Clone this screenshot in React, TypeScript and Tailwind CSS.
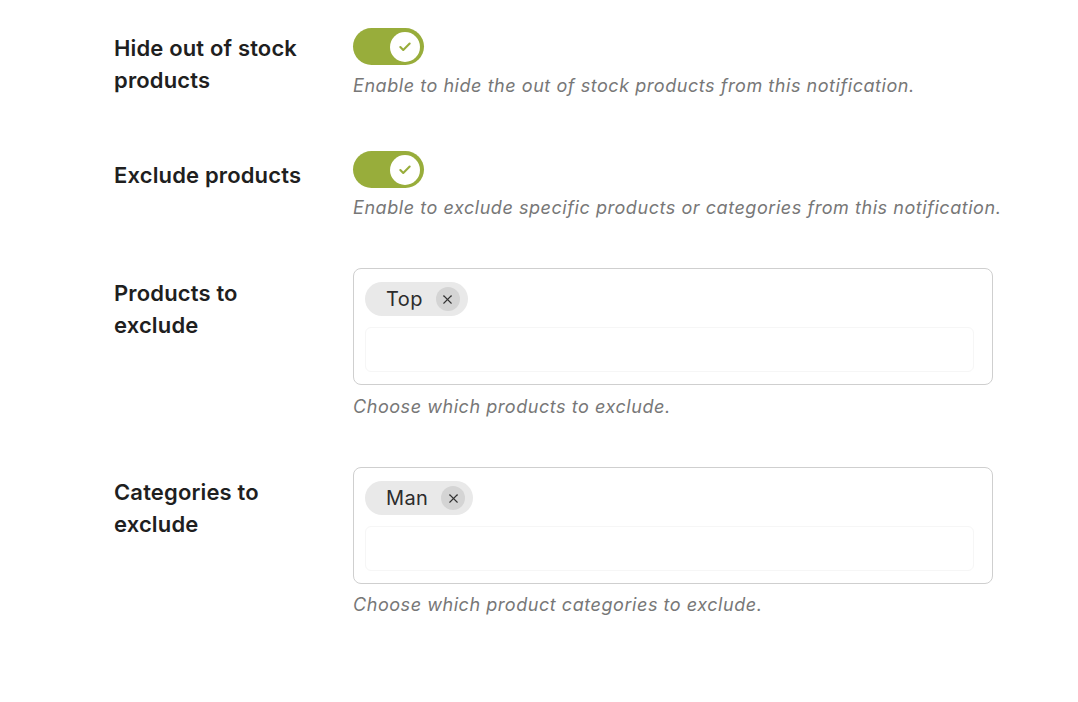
import { Check, X } from "lucide-react";

const font = { fontFamily: "Inter, 'Noto Sans', sans-serif" };

function Toggle() {
  return (
    <div className="flex h-[37px] w-[71px] items-center justify-end rounded-full bg-[#98ad3b] pr-[4px]">
      <div className="flex h-[30px] w-[30px] items-center justify-center rounded-full bg-white">
        <Check className="h-[14px] w-[14px] text-[#98ad3b]" strokeWidth={3.6} />
      </div>
    </div>
  );
}

function Chip({ label }: { label: string }) {
  return (
    <div className="flex h-[34px] w-fit items-center rounded-full bg-[#e9e9e9] pl-[21px] pr-[8px]">
      <span className="text-[20px] leading-none tracking-[0.4px] text-[#2c2c2c]">{label}</span>
      <span className="ml-[13px] flex h-[24px] w-[24px] items-center justify-center rounded-full bg-[#d4d4d4]">
        <X className="h-[15px] w-[15px] text-[#333]" strokeWidth={1.7} />
      </span>
    </div>
  );
}

function TagBox({ chip }: { chip: string }) {
  return (
    <div className="w-[640px] rounded-[8px] border border-[#cfcfcf] bg-white px-[11px] pb-[12px] pt-[13px]">
      <Chip label={chip} />
      <div className="mr-[7px] mt-[11px] h-[45px] rounded-[6px] border border-[#f6f6f6]" />
    </div>
  );
}

function Desc({ children }: { children: React.ReactNode }) {
  return <p className="text-[18px] italic leading-[26px] tracking-[0.55px] text-[#777]">{children}</p>;
}

function Label({ children, pad }: { children: React.ReactNode; pad: string }) {
  return (
    <div
      className={`w-[239px] shrink-0 text-[22px] font-semibold leading-[32px] tracking-[0.15px] text-[#1f1f1f] ${pad}`}
    >
      {children}
    </div>
  );
}

export default function App() {
  return (
    <div className="min-h-[702px] w-[1078px] bg-white pl-[114px] pt-[28px]" style={font}>
      <div className="flex">
        <Label pad="pt-[4px]">
          Hide out of stock
          <br />
          products
        </Label>
        <div>
          <Toggle />
          <div className="mt-[8px]">
            <Desc>Enable to hide the out of stock products from this notification.</Desc>
          </div>
        </div>
      </div>

      <div className="mt-[52px] flex">
        <Label pad="pt-[8px]">Exclude products</Label>
        <div>
          <Toggle />
          <div className="mt-[7px]">
            <Desc>Enable to exclude specific products or categories from this notification.</Desc>
          </div>
        </div>
      </div>

      <div className="mt-[47px] flex">
        <Label pad="pt-[9px]">
          Products to
          <br />
          exclude
        </Label>
        <div>
          <TagBox chip="Top" />
          <div className="mt-[9px]">
            <Desc>Choose which products to exclude.</Desc>
          </div>
        </div>
      </div>

      <div className="mt-[47px] flex">
        <Label pad="pt-[9px]">
          Categories to
          <br />
          exclude
        </Label>
        <div>
          <TagBox chip="Man" />
          <div className="mt-[8px]">
            <Desc>Choose which product categories to exclude.</Desc>
          </div>
        </div>
      </div>
    </div>
  );
}
